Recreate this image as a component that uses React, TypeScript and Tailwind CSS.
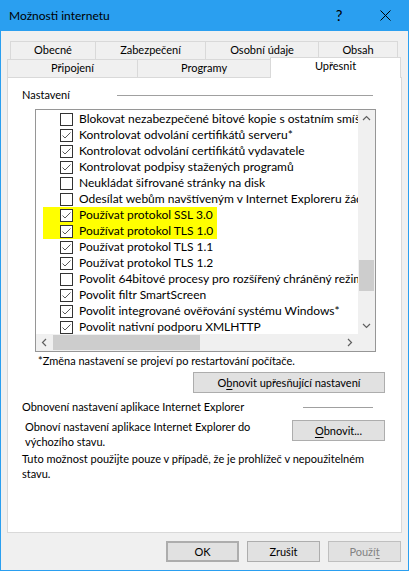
import React from 'react';

const FONT = { fontFamily: 'Lato, "Liberation Sans", sans-serif' };

type Item = { label: string; checked: boolean; marked?: boolean };

const items: Item[] = [
  { label: 'Blokovat nezabezpečené bitové kopie s ostatním smíšeným obsahem', checked: false },
  { label: 'Kontrolovat odvolání certifikátů serveru*', checked: true },
  { label: 'Kontrolovat odvolání certifikátů vydavatele', checked: true },
  { label: 'Kontrolovat podpisy stažených programů', checked: true },
  { label: 'Neukládat šifrované stránky na disk', checked: false },
  { label: 'Odesílat webům navštíveným v Internet Exploreru žádost „Do Not Track“', checked: false },
  { label: 'Používat protokol SSL 3.0', checked: true, marked: true },
  { label: 'Používat protokol TLS 1.0', checked: true, marked: true },
  { label: 'Používat protokol TLS 1.1', checked: true },
  { label: 'Používat protokol TLS 1.2', checked: true },
  { label: 'Povolit 64bitové procesy pro rozšířený chráněný režim*', checked: false },
  { label: 'Povolit filtr SmartScreen', checked: true },
  { label: 'Povolit integrované ověřování systému Windows*', checked: true },
  { label: 'Povolit nativní podporu XMLHTTP', checked: true },
];

function CheckBox({ checked }: { checked: boolean }) {
  return (
    <div className="w-[13px] h-[13px] shrink-0 border border-[#333333] bg-white flex items-center justify-center">
      {checked && (
        <svg width="11" height="11" viewBox="0 0 11 11">
          <polyline points="1.5,5.5 4,8 9.5,2.5" fill="none" stroke="#5a5a5a" strokeWidth="1" />
        </svg>
      )}
    </div>
  );
}

function Chevron({ dir }: { dir: 'up' | 'down' | 'left' | 'right' }) {
  const pts = {
    up: '1,6 4.5,2.5 8,6',
    down: '1,3 4.5,6.5 8,3',
    left: '6,1 2.5,4.5 6,8',
    right: '3,1 6.5,4.5 3,8',
  }[dir];
  return (
    <svg width="9" height="9" viewBox="0 0 9 9">
      <polyline points={pts} fill="none" stroke="#606060" strokeWidth="1.2" />
    </svg>
  );
}

function Row({ item }: { item: Item }) {
  return (
    <div className="h-[16px] flex pl-[7px] whitespace-nowrap">
      <div className={`flex items-center h-[16px] pl-[17px] gap-[6px] ${item.marked ? 'bg-[#ffff00] w-[174px]' : ''}`}>
        <CheckBox checked={item.checked} />
        <span className="leading-[16px]">{item.label}</span>
      </div>
    </div>
  );
}

function Button({ children, className = '' }: { children: React.ReactNode; className?: string }) {
  return (
    <div className={`h-[21px] flex items-center justify-center bg-[#e1e1e1] border border-[#adadad] leading-[16px] text-[11px] ${className}`}>
      {children}
    </div>
  );
}

export default function App() {
  return (
    <div
      className="w-[409px] h-[571px] bg-[#f0f0f0] border-x border-b border-[#2a9ff0] flex flex-col text-[11px] text-black overflow-hidden"
      style={FONT}
    >
      {/* Title bar */}
      <div className="h-[31px] bg-[#2a9ff0] flex items-center shrink-0">
        <span className="pl-[8px] leading-[16px] text-[12px]">Možnosti internetu</span>
        <div className="ml-auto flex h-full">
          <div className="w-[46px] flex items-center justify-center text-[15px]">?</div>
          <div className="w-[46px] flex items-center justify-center">
            <svg width="11" height="11" viewBox="0 0 11 11">
              <path d="M0.5 0.5 L10.5 10.5 M10.5 0.5 L0.5 10.5" stroke="#000" strokeWidth="1" />
            </svg>
          </div>
        </div>
      </div>

      {/* Tabs */}
      <div className="mt-[10px] flex pl-[9px] h-[18px] shrink-0">
        <div className="w-[86px] border border-b-0 border-[#d9d9d9] flex items-center justify-center">Obecné</div>
        <div className="w-[111px] -ml-px border border-b-0 border-[#d9d9d9] flex items-center justify-center">Zabezpečení</div>
        <div className="w-[114px] -ml-px border border-b-0 border-[#d9d9d9] flex items-center justify-center">Osobní údaje</div>
        <div className="w-[80px] -ml-px border border-b-0 border-[#d9d9d9] flex items-center justify-center">Obsah</div>
      </div>
      <div className="flex items-end pl-[6px] h-[18px] shrink-0">
        <div className="w-[131px] h-[18px] border border-b-0 border-[#d9d9d9] bg-[#f0f0f0] flex items-center justify-center">Připojení</div>
        <div className="w-[134px] h-[18px] -ml-px border border-b-0 border-[#d9d9d9] bg-[#f0f0f0] flex items-center justify-center">Programy</div>
        <div className="relative z-10 w-[131px] h-[21px] -ml-px -mb-px border border-b-0 border-[#d9d9d9] bg-white flex items-center justify-center pb-[3px]">Upřesnit</div>
      </div>

      {/* Panel */}
      <div className="mx-[6px] h-[456px] shrink-0 bg-white border border-[#d9d9d9] flex flex-col">
        <div className="flex items-center pt-[9px] pl-[14px] pr-[28px] h-[25px]">
          <span className="leading-[16px]">Nastavení</span>
          <div className="ml-auto w-[256px] h-px bg-[#a0a0a0]" />
        </div>

        {/* List box */}
        <div className="mt-[6px] ml-[27px] w-[341px] h-[243px] border border-[#969696] flex flex-col text-[12px]">
          <div className="flex h-[224px]">
            <div className="flex-1 overflow-hidden pt-[1px]">
              {items.map((it) => (
                <Row key={it.label} item={it} />
              ))}
            </div>
            <div className="w-[17px] bg-[#f0f0f0] flex flex-col">
              <div className="h-[17px] flex items-center justify-center">
                <Chevron dir="up" />
              </div>
              <div className="flex-1 pt-[133px] px-px">
                <div className="h-[31px] bg-[#cdcdcd]" />
              </div>
              <div className="h-[17px] flex items-center justify-center">
                <Chevron dir="down" />
              </div>
            </div>
          </div>
          <div className="h-[17px] bg-[#f0f0f0] flex">
            <div className="w-[17px] flex items-center justify-center">
              <Chevron dir="left" />
            </div>
            <div className="flex-1 py-px">
              <div className="w-[147px] h-full bg-[#cdcdcd]" />
            </div>
            <div className="w-[17px] flex items-center justify-center">
              <Chevron dir="right" />
            </div>
            <div className="w-[17px]" />
          </div>
        </div>

        <div className="mt-[1px] ml-[30px] leading-[16px]">*Změna nastavení se projeví po restartování počítače.</div>

        <div className="mt-[3px] flex justify-end pr-[16px]">
          <Button className="w-[192px]">
            <span>
              O<u className="underline-offset-2">b</u>novit upřesňující nastavení
            </span>
          </Button>
        </div>

        <div className="mt-[6px] flex items-center pl-[14px] pr-[28px]">
          <span className="leading-[16px]">Obnovení nastavení aplikace Internet Explorer</span>
          <div className="ml-auto w-[70px] h-px bg-[#a0a0a0]" />
        </div>

        <div className="mt-[4px] flex items-start pl-[17px] pr-[16px]">
          <div className="leading-[15px] whitespace-nowrap">
            Obnoví nastavení aplikace Internet Explorer do
            <br />
            výchozího stavu.
          </div>
          <Button className="ml-auto mt-[1px] w-[93px] shrink-0">
            <span>
              <u className="underline-offset-2">O</u>bnovit...
            </span>
          </Button>
        </div>

        <div className="mt-[2px] pl-[14px] leading-[15px] whitespace-nowrap">
          Tuto možnost použijte pouze v případě, že je prohlížeč v nepoužitelném
          <br />
          stavu.
        </div>
      </div>

      {/* Footer */}
      <div className="pt-[8px] flex justify-end gap-[8px] pr-[7px]">
        <Button className="w-[73px] border-2 border-[#0078d7]">OK</Button>
        <Button className="w-[73px]">Zrušit</Button>
        <Button className="w-[73px] bg-[#cccccc] border-[#bfbfbf] text-[#838383]">
          <span>
            Použí<u className="underline-offset-2">t</u>
          </span>
        </Button>
      </div>
    </div>
  );
}
